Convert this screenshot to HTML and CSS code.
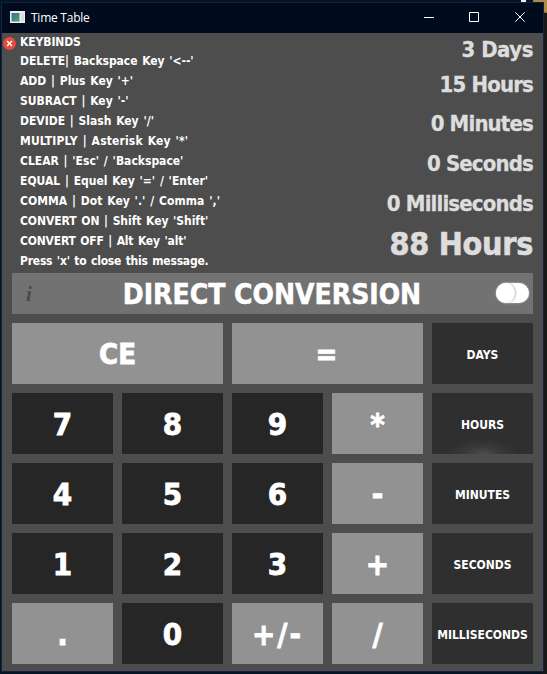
FILE: index.html
```html
<!DOCTYPE html>
<html lang="en">
<head>
<meta charset="utf-8">
<title>Time Table</title>
<link rel="stylesheet" href="styles.css">
</head>
<body>
<div class="speck"></div>
<div class="moon"></div>
<div class="window">
  <header class="titlebar">
    <svg class="app-icon" width="15" height="12" viewBox="0 0 15 12">
      <defs><linearGradient id="scene" x1="0" y1="0" x2="1" y2="1"><stop offset="0" stop-color="#4169a0"/><stop offset="1" stop-color="#45a868"/></linearGradient></defs>
      <rect width="15" height="12" fill="#eceeed"/><rect x="1.5" y="2" width="8" height="8.5" fill="url(#scene)"/><rect x="11" y="2" width="3" height="8.5" fill="#dadddd"/>
    </svg>
    <span class="title">Time Table</span>
    <svg class="controls" width="102" height="12" viewBox="0 0 102 12" fill="none" stroke="#fff">
      <path d="M0 6.5h10M45.500 1.500h9v9h-9zM91.300 1.300l9.400 9.400M100.700 1.300l-9.400 9.400"/>
    </svg>
  </header>
  <main class="content">
    <section class="display">
      <svg class="close" width="13" height="13" viewBox="0 0 13 13"><circle cx="6.500" cy="6.500" r="6.500" fill="#e84b3d"/><path d="M4.100 4.100l4.800 4.800M8.900 4.100l-4.800 4.800" stroke="#fff" stroke-width="1.400"/></svg>
      <ul class="keybinds">
        <li class="k1">KEYBINDS</li>
        <li class="k2">DELETE| Backspace Key '&lt;--'</li>
        <li>ADD | Plus Key '+'</li>
        <li>SUBRACT | Key '-'</li>
        <li>DEVIDE | Slash Key '/'</li>
        <li class="k6">MULTIPLY | Asterisk Key '*'</li>
        <li>CLEAR | 'Esc' / 'Backspace'</li>
        <li>EQUAL | Equel Key '=' / 'Enter'</li>
        <li class="k9">COMMA | Dot Key '.' / Comma ','</li>
        <li class="k10">CONVERT ON | Shift Key 'Shift'</li>
        <li class="k11">CONVERT OFF | Alt Key 'alt'</li>
        <li class="k12">Press 'x' to close this message.</li>
      </ul>
      <div class="results">
        <div class="result first">3 Days</div>
        <div class="result second">15 Hours</div>
        <div class="result">0 Minutes</div>
        <div class="result">0 Seconds</div>
        <div class="result">0 Milliseconds</div>
        <div class="total">88 Hours</div>
      </div>
    </section>
    <section class="mode">
      <span class="info">i</span>
      <span class="mode-name">DIRECT CONVERSION</span>
      <span class="toggle"><span class="knob"></span></span>
    </section>
    <section class="keys">
      <button class="key light wide">CE</button><button class="key light wide equals">=</button><button class="key unit">DAYS</button>
      <button class="key">7</button><button class="key">8</button><button class="key">9</button><button class="key light">*</button><button class="key unit glow">HOURS</button>
      <button class="key">4</button><button class="key">5</button><button class="key">6</button><button class="key light">-</button><button class="key unit">MINUTES</button>
      <button class="key">1</button><button class="key">2</button><button class="key">3</button><button class="key light">+</button><button class="key unit">SECONDS</button>
      <button class="key light">.</button><button class="key">0</button><button class="key light sign">+/-</button><button class="key light">/</button><button class="key unit">MILLISECONDS</button>
    </section>
  </main>
</div>
</body>
</html>
```
FILE: styles.css
```css
* { box-sizing: border-box; }
body {
  margin: 0;
  width: 547px;
  height: 674px;
  overflow: hidden;
  position: relative;
  padding: 2px 3px 2px 1px;
  background: linear-gradient(90deg, #061426 0 540px, #181818 543px);
  font-family: "DejaVu Sans Condensed", "DejaVu Sans", sans-serif;
  font-weight: bold;
  font-stretch: condensed;
  color: #fff;
}
.speck { position: absolute; left: 521px; top: 0; width: 5px; height: 2px; background: #eee; }
.moon { position: absolute; left: 533px; top: -14px; width: 30px; height: 27px; border-radius: 50%; background: #aa8c45; }
.window {
  position: relative;
  width: 543px;
  height: 670px;
  border: 1px solid #14233b;
  background: #4d4d4d;
}
.titlebar { height: 30px; background: #000c1e; display: flex; align-items: center; padding: 0 17px 0 8px; }
.app-icon { margin-top: -2px; }
.title { margin-left: 6px; font: 12px/16px "Open Sans", "Noto Sans", sans-serif; letter-spacing: -.25px; }
.controls { margin-left: auto; margin-top: -2px; }
.content { padding: 0 10px; }
.display { height: 240px; display: flex; justify-content: space-between; position: relative; }
.close { position: absolute; left: -9px; top: 4px; }
.keybinds { list-style: none; margin: 0; padding: 0 0 0 8px; font-size: 12px; line-height: 20px; white-space: nowrap; word-spacing: 1px; }
.keybinds li { height: 20px; line-height: 20px; }
.keybinds .k1 { height: 18px; line-height: 18px; letter-spacing: -.1px; }
.keybinds .k2 { letter-spacing: -.05px; }
.keybinds .k6 { letter-spacing: .15px; }
.keybinds .k9 { letter-spacing: .04px; }
.keybinds .k10 { letter-spacing: -.06px; }
.keybinds .k11 { letter-spacing: -.18px; }
.keybinds .k12 { letter-spacing: -.22px; }
.results { text-align: right; color: #ddd; font-size: 22px; letter-spacing: -.85px; white-space: nowrap; -webkit-text-stroke: .3px; }
.result { height: 40px; line-height: 40px; }
.result.first { height: 34px; line-height: 34px; letter-spacing: -.5px; }
.result.second { height: 37px; line-height: 35px; }
.total { font-size: 32px; height: 40px; line-height: 41px; letter-spacing: -.3px; -webkit-text-stroke: .6px; }
.mode {
  height: 41px;
  background: #727272;
  display: grid;
  grid-template-columns: 40px 1fr 40px;
  align-items: center;
  text-align: center;
}
.info { font: italic bold 21px "Liberation Serif", serif; color: #4b4b4b; margin-right: 6px; }
.mode-name { font-size: 28px; line-height: 40px; white-space: nowrap; padding-top: 2px; margin-left: -1px; -webkit-text-stroke: .5px; }
.toggle { width: 33px; height: 20px; border-radius: 10px; background: #fff; box-shadow: 0 0 2px #ccc; margin-left: 3px; margin-top: -2px; }
.knob { display: block; width: 19px; height: 20px; border-radius: 50%; background: #fff; box-shadow: 1px 0 2px #bbb; }
.keys {
  margin-top: 9px;
  display: grid;
  grid-template-columns: 101px 101px 91px 91px 101px;
  grid-auto-rows: 61px;
  gap: 9px;
}
.key {
  border: 0;
  padding: 2px 0 0;
  background: #262626;
  color: #fff;
  font: bold 31px/59px "DejaVu Sans Condensed", "DejaVu Sans", sans-serif;
  font-stretch: condensed;
  white-space: nowrap;
  -webkit-text-stroke: .8px;
}
.light { background: #929292; }
.wide { grid-column: span 2; font-size: 29px; }
.equals { padding-right: 2px; }
.sign { letter-spacing: 2px; }
.unit { background: #2f2f2f; font-size: 12px; padding-top: 3px; line-height: 58px; -webkit-text-stroke: 0; }
.glow { background: radial-gradient(ellipse 35px 15px at 50% 100%, #4d4d4d, #393939 50%, #2f2f2f); }
```
